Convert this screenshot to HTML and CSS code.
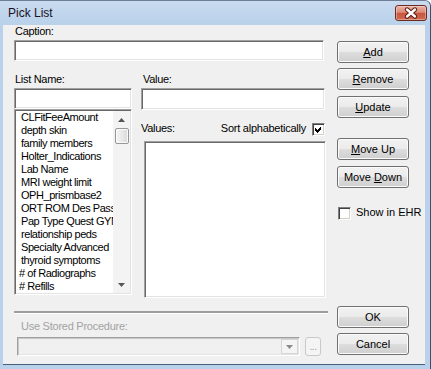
FILE: index.html
```html
<!DOCTYPE html>
<html lang="en">
<head>
    <meta charset="UTF-8">
    <title>Pick List</title>
    <link rel="stylesheet" href="styles.css">
</head>
<body>
    <div class="window">
        <div class="titlebar">
            <span class="title">Pick List</span>
            <span class="close">
                <svg width="30" height="14" viewBox="0 0 30 14">
                    <path d="M11 3.5 L19 10.5 M19 3.5 L11 10.5" stroke="#5a1a12" stroke-width="4.4" stroke-linecap="round"/>
                    <path d="M11 3.5 L19 10.5 M19 3.5 L11 10.5" stroke="#fff" stroke-width="2.4" stroke-linecap="round"/>
                </svg>
            </span>
        </div>

        <div class="client">
            <div class="main">
                <div class="lbl caption-lbl">Caption:</div>
                <div class="edit caption"></div>

                <div class="pair">
                    <div class="col-left">
                        <div class="lbl">List Name:</div>
                        <div class="edit list-name"></div>
                        <div class="listbox">
                            <ul class="items">
                                <li>CLFitFeeAmount</li>
                                <li>depth skin</li>
                                <li>family members</li>
                                <li>Holter_Indications</li>
                                <li>Lab Name</li>
                                <li>MRI weight limit</li>
                                <li>OPH_prismbase2</li>
                                <li>ORT ROM Des Pass</li>
                                <li>Pap Type Quest GYN</li>
                                <li>relationship peds</li>
                                <li>Specialty Advanced</li>
                                <li>thyroid symptoms</li>
                                <li class="hash"># of Radiographs</li>
                                <li class="hash"># Refills</li>
                            </ul>
                            <div class="vscroll">
                                <div class="arrow">
                                    <svg width="7" height="4" viewBox="0 0 7 4"><polygon points="0,4 3.5,0 7,4" fill="#555"/></svg>
                                </div>
                                <div class="thumb"></div>
                                <div class="track"></div>
                                <div class="arrow">
                                    <svg width="7" height="4" viewBox="0 0 7 4"><polygon points="0,0 7,0 3.5,4" fill="#555"/></svg>
                                </div>
                            </div>
                        </div>
                    </div>

                    <div class="col-right">
                        <div class="lbl value-lbl">Value:</div>
                        <div class="edit value"></div>
                        <div class="values-head">
                            <span class="lbl">Values:</span>
                            <span class="sort">
                                <span class="sort-text">Sort alphabetically</span>
                                <span class="check">
                                    <svg width="11" height="11" viewBox="0 0 11 11"><path d="M2 4 L4 6 L8 2 L8 5 L4 9 L2 7 Z" fill="#000" shape-rendering="crispEdges"/></svg>
                                </span>
                            </span>
                        </div>
                        <div class="edit values"></div>
                    </div>
                </div>

                <div class="sep"></div>
                <div class="lbl disabled">Use Stored Procedure:</div>
                <div class="proc-row">
                    <div class="combo">
                        <span class="drop">
                            <svg width="7" height="4" viewBox="0 0 7 4"><polygon points="0,0 7,0 3.5,4" fill="#8a8a8a"/></svg>
                        </span>
                    </div>
                    <span class="ellipsis">...</span>
                </div>
            </div>

            <div class="buttons">
                <div class="btn"><u>A</u>dd</div>
                <div class="btn remove"><u>R</u>emove</div>
                <div class="btn update"><u>U</u>pdate</div>
                <div class="btn move-up"><u>M</u>ove Up</div>
                <div class="btn move-down">Move <u>D</u>own</div>
                <div class="chk-row">
                    <span class="check"></span>
                    <span class="chk-text">Show in EHR</span>
                </div>
                <div class="btn ok">OK</div>
                <div class="btn cancel">Cancel</div>
            </div>
        </div>
    </div>
</body>
</html>
```

FILE: styles.css
```css
* {
    box-sizing: border-box;
}

body {
    margin: 0;
    font-family: "Liberation Sans", Arial, sans-serif;
    font-size: 11px;
    color: #000;
}

/* window frame */
.window {
    width: 431px;
    height: 369px;
    display: flex;
    flex-direction: column;
    background: #b9d1ea;
    border-top: 1px solid #6d7f96;
    border-right: 1px solid #3f5168;
    border-top-right-radius: 6px;
}

.titlebar {
    height: 24px;
    display: flex;
    align-items: flex-start;
    background: linear-gradient(#c9dbef, #b9d1ea);
    border-top-right-radius: 6px;
}

.title {
    padding: 5px 0 0 8px;
    font-size: 12px;
    line-height: 15px;
    color: #1b1024;
}

.close {
    margin: 4px 3px 0 auto;
    width: 32px;
    height: 16px;
    border: 1px solid #6d2a20;
    border-radius: 3px;
    background: linear-gradient(#eab0a3 0%, #dc8b78 45%, #c9553f 52%, #d06a52 100%);
    box-shadow: inset 0 0 0 1px rgba(255, 255, 255, 0.35);
}

.close svg {
    display: block;
}

.client {
    flex: 1;
    display: flex;
    margin: 0 5px 4px 3px;
    background: #f0f0f0;
    border-bottom: 1px solid #44607f;
}

/* left part */
.main {
    width: 324px;
    padding-left: 11px;
}

.lbl {
    line-height: 13px;
    letter-spacing: -0.3px;
    white-space: nowrap;
}

.caption-lbl {
    margin-left: 1px;
}

.edit {
    background: #fff;
    border: 1px solid;
    border-color: #a0a0a0 #fff #fff #a0a0a0;
    box-shadow: inset 1px 1px 0 #696969, inset -1px -1px 0 #e3e3e3;
}

.caption {
    margin-top: 2px;
    width: 310px;
    height: 21px;
}

.pair {
    display: flex;
    margin-top: 12px;
}

.col-left {
    width: 118px;
}

.col-left .lbl {
    margin-left: 1px;
}

.list-name {
    margin-top: 2px;
    height: 21px;
}

.listbox {
    display: flex;
    height: 186px;
    background: #fff;
    border: 1px solid;
    border-color: #a0a0a0 #fff #fff #a0a0a0;
    box-shadow: inset 1px 1px 0 #696969, inset -1px -1px 0 #e3e3e3;
    padding: 1px;
}

.items {
    flex: 1;
    margin: 0;
    padding: 0;
    list-style: none;
    overflow: hidden;
}

.items li {
    padding-left: 5px;
    line-height: 13px;
    letter-spacing: -0.45px;
    white-space: nowrap;
}

.items li.hash {
    padding-left: 3px;
}

.vscroll {
    width: 17px;
    display: flex;
    flex-direction: column;
    background: #f3f3f3;
}

.arrow {
    height: 17px;
    display: flex;
    align-items: center;
    justify-content: center;
}

.arrow svg {
    display: block;
}

.thumb {
    height: 16px;
    margin: 0 1px 0 2px;
    border: 1px solid #979797;
    border-radius: 2px;
    background: linear-gradient(to right, #f6f6f6, #e9e9e9 50%, #d9d9d9);
    box-shadow: inset 0 0 0 1px #fbfbfb;
}

.track {
    flex: 1;
}

.col-right {
    margin-left: 9px;
    width: 186px;
}

.value-lbl {
    margin-left: 2px;
}

.value {
    margin-top: 2px;
    width: 184px;
    height: 22px;
}

.values-head {
    margin-top: 11px;
    width: 184px;
    display: flex;
    justify-content: space-between;
    align-items: center;
}

.sort {
    display: flex;
    align-items: center;
    gap: 6px;
}

.sort-text {
    letter-spacing: -0.25px;
    line-height: 13px;
    white-space: nowrap;
}

.check {
    flex: none;
    width: 13px;
    height: 13px;
    background: #fff;
    border: 1px solid;
    border-color: #808080 #fff #fff #808080;
    box-shadow: inset 1px 1px 0 #404040, inset -1px -1px 0 #d4d0c8;
}

.sort .check {
    margin-top: 2px;
}

.check svg {
    display: block;
}

.values {
    margin: 5px 0 0 3px;
    width: 182px;
    height: 157px;
}

.sep {
    margin-top: 13px;
    width: 314px;
    height: 3px;
    border-top: 2px solid #9d9d9d;
    border-bottom: 1px solid #fff;
}

.disabled {
    margin: 6px 0 0 7px;
    color: #a2a2a2;
    letter-spacing: -0.25px;
}

.proc-row {
    display: flex;
    margin: 4px 0 0 3px;
}

.combo {
    width: 283px;
    height: 19px;
    display: flex;
    justify-content: flex-end;
    background: #f0f0f0;
    border: 1px solid;
    border-color: #a0a0a0 #fff #fff #a0a0a0;
    box-shadow: inset 1px 1px 0 #c8c8c8, inset -1px -1px 0 #e3e3e3;
    padding: 1px;
}

.drop {
    width: 17px;
    display: flex;
    align-items: center;
    justify-content: center;
    border: 1px solid #d6d6d6;
    background: #f4f4f4;
}

.ellipsis {
    margin-left: 5px;
    width: 16px;
    height: 19px;
    border: 1px solid #c9c9c9;
    border-radius: 3px;
    background: #f4f4f4;
    color: #a0a0a0;
    text-align: center;
    line-height: 17px;
    letter-spacing: -0.5px;
    font-size: 10px;
}

/* right button column */
.buttons {
    margin-left: 10px;
    width: 72px;
    display: flex;
    flex-direction: column;
    padding: 16px 0 9px;
}

.btn {
    height: 22px;
    border: 1px solid #707070;
    border-radius: 3px;
    background: linear-gradient(#f2f2f2 0%, #ebebeb 48%, #dddddd 52%, #cfcfcf 100%);
    box-shadow: inset 0 0 0 1px #fbfbfb;
    text-align: center;
    line-height: 20px;
}

.remove {
    margin-top: 5px;
}

.update {
    margin-top: 6px;
}

.move-up {
    margin-top: 20px;
}

.move-down {
    margin-top: 6px;
}

.chk-row {
    margin-top: 16px;
    display: flex;
    align-items: center;
    gap: 5px;
    padding-left: 1px;
    line-height: 13px;
}

.chk-text {
    white-space: nowrap;
}

.chk-row .check {
    margin-top: 3px;
}

.ok {
    margin-top: auto;
}

.cancel {
    margin-top: 5px;
}
```
